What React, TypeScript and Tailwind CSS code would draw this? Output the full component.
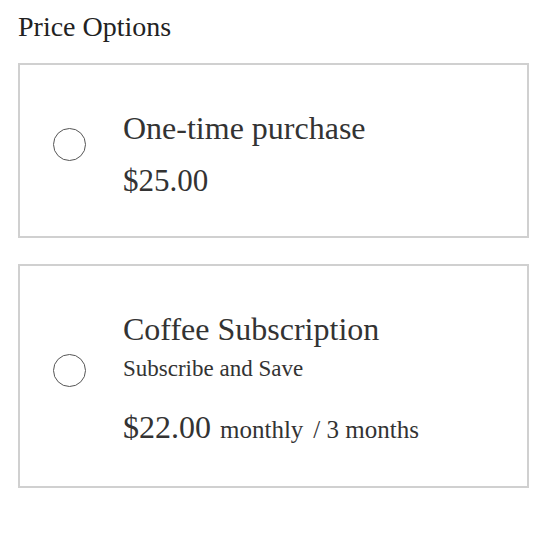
export default function App() {
  return (
    <div className="min-h-screen bg-white px-[18px] pt-[8px] text-[#333] font-['Liberation_Serif',serif]">
      <h2 className="text-[28px] leading-[38px] text-[#222]">Price Options</h2>

      <div className="mt-[17px] flex flex-col gap-[26px] w-[511px]">
        {/* One-time */}
        <label className="flex items-center h-[175px] border-2 border-[#d0d0d0] pl-[33px]">
          <span className="w-[33px] h-[33px] mb-[12px] rounded-full border-[1.5px] border-[#555] shrink-0" />
          <div className="ml-[37px] mt-[7px] flex flex-col">
            <span className="text-[32px] leading-[40px]">One-time purchase</span>
            <span className="text-[31px] leading-[40px] mt-[13px]">$25.00</span>
          </div>
        </label>

        {/* Subscription */}
        <label className="flex items-center h-[224px] border-2 border-[#d0d0d0] pl-[33px]">
          <span className="w-[33px] h-[33px] mb-[12px] rounded-full border-[1.5px] border-[#555] shrink-0" />
          <div className="ml-[37px] mt-[10px] flex flex-col">
            <span className="text-[32px] leading-[40px]">Coffee Subscription</span>
            <span className="text-[23px] leading-[30px] mt-[5px]">Subscribe and Save</span>
            <span className="mt-[23px] leading-[40px]">
              <span className="text-[32px]">$22.00</span>
              <span className="text-[25px] ml-[9px]">monthly</span>
              <span className="text-[25px] ml-[10px]">/ 3 months</span>
            </span>
          </div>
        </label>
      </div>
    </div>
  );
}
